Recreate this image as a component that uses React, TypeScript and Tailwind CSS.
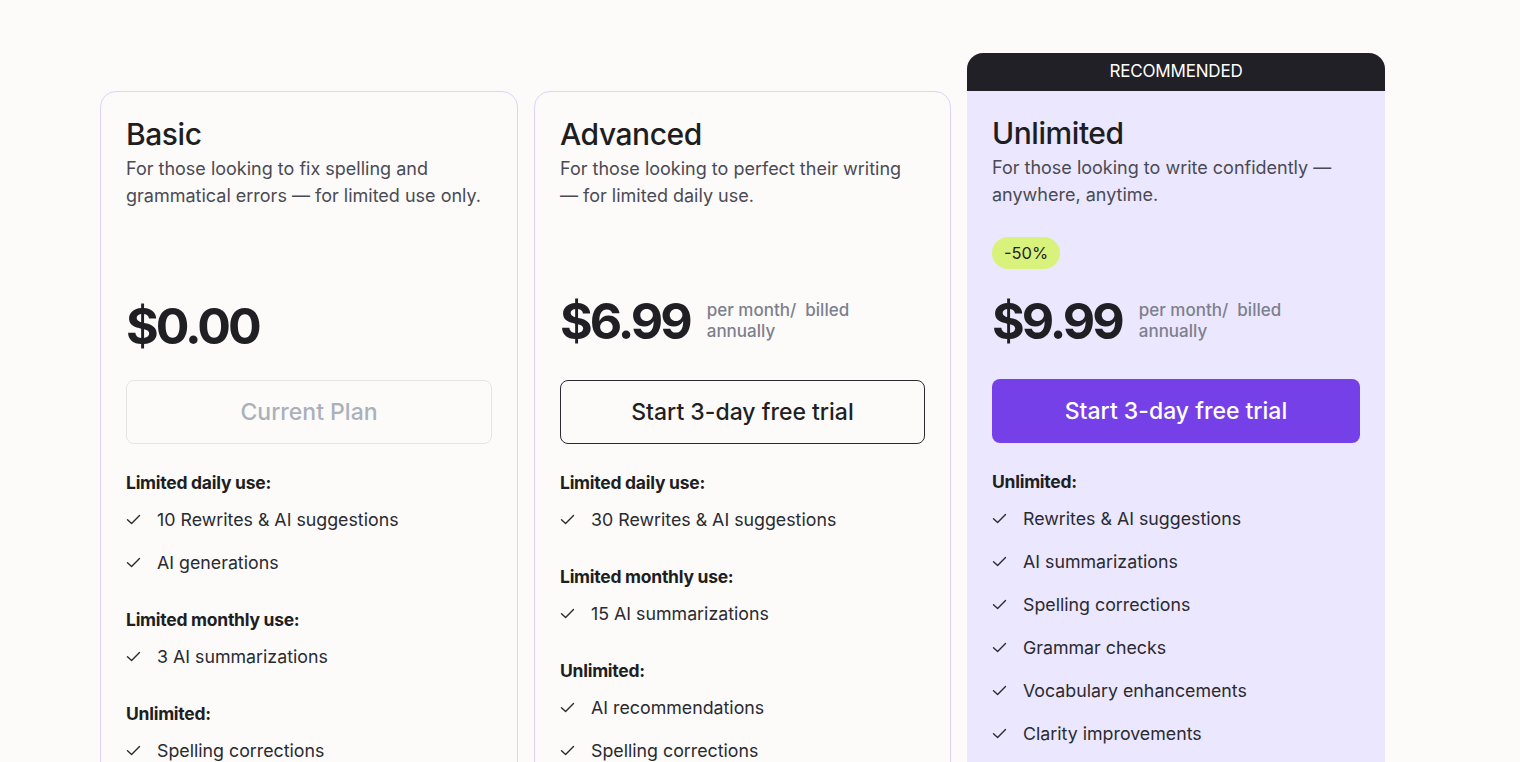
import React from "react";

type Section = { title: string; items: string[] };

const Check = () => (
  <svg width="15" height="15" viewBox="0 0 15 15" fill="none" className="shrink-0">
    <path d="M1.5 7.8 L5.6 11.6 L13.5 3.6" stroke="#2b2b31" strokeWidth="1.4" strokeLinecap="round" strokeLinejoin="round" />
  </svg>
);

const Features = ({ sections }: { sections: Section[] }) => (
  <div className="flex flex-col gap-[30px] mt-[25px]">
    {sections.map((s) => (
      <div key={s.title} className="flex flex-col">
        <div className="text-[17.5px] leading-[27px] font-bold text-[#1e1e23] tracking-[-0.015em]">{s.title}</div>
        <ul className="flex flex-col gap-[16px] mt-[10px]">
          {s.items.map((it) => (
            <li key={it} className="flex items-center gap-[16px] text-[17.8px] leading-[27px] text-[#2a2a31]">
              <Check />
              <span>{it}</span>
            </li>
          ))}
        </ul>
      </div>
    ))}
  </div>
);

const PriceRow = ({ price, sub, shift }: { price: string; sub: boolean; shift?: boolean }) => (
  <div className={`flex items-center gap-[17px] h-[60px] mt-[22px] ${shift ? "pt-[10px]" : ""}`}>
    <div className="text-[50px] leading-[60px] font-bold text-[#1f1f24] tracking-[-0.06em]">{price}</div>
    {sub && (
      <div className="text-[17px] leading-[21px] text-[#7d808d] font-medium whitespace-nowrap">
        per month/&nbsp; billed
        <br />
        annually
      </div>
    )}
  </div>
);

export default function App() {
  return (
    <div
      className="min-h-[762px] bg-[#fcfbfa] pt-[53px] pl-[100px] overflow-hidden"
      style={{ fontFamily: "Inter, 'Noto Sans', sans-serif" }}
    >
      <div className="flex items-start gap-[16px]">
        {/* Basic */}
        <div className="w-[418px] mt-[38px] h-[900px] rounded-[16px] border border-[#d9d5fb] px-[25px] pt-[24px] flex flex-col">
          <div className="text-[30px] leading-[36px] font-medium text-[#1e1e22] tracking-[-0.015em]">Basic</div>
          <div className="mt-[3px] text-[18px] leading-[27px] text-[#4a4a54]">
            For those looking to fix spelling and
            <br />
            grammatical errors — for limited use only.
          </div>
          <div className="h-[32px] mt-[28px]" />
          <PriceRow price="$0.00" sub={false} shift />
          <button className="mt-[29px] h-[64px] w-full rounded-[8px] border border-[#e7e5e4] text-[23px] text-[#aab1bb] font-medium">
            Current Plan
          </button>
          <Features
            sections={[
              { title: "Limited daily use:", items: ["10 Rewrites & AI suggestions", "AI generations"] },
              { title: "Limited monthly use:", items: ["3 AI summarizations"] },
              { title: "Unlimited:", items: ["Spelling corrections", "Grammar checks"] },
            ]}
          />
        </div>

        {/* Advanced */}
        <div className="w-[417px] mt-[38px] h-[900px] rounded-[16px] border border-[#d9d5fb] px-[25px] pt-[24px] flex flex-col">
          <div className="text-[30px] leading-[36px] font-medium text-[#1e1e22] tracking-[-0.015em]">Advanced</div>
          <div className="mt-[3px] text-[18px] leading-[27px] text-[#4a4a54]">
            For those looking to perfect their writing
            <br />— for limited daily use.
          </div>
          <div className="h-[32px] mt-[28px]" />
          <PriceRow price="$6.99" sub />
          <button className="mt-[29px] h-[64px] w-full rounded-[8px] border border-[#2a2a30] text-[23px] text-[#1f1f24] font-medium">
            Start 3-day free trial
          </button>
          <Features
            sections={[
              { title: "Limited daily use:", items: ["30 Rewrites & AI suggestions"] },
              { title: "Limited monthly use:", items: ["15 AI summarizations"] },
              { title: "Unlimited:", items: ["AI recommendations", "Spelling corrections", "Grammar checks"] },
            ]}
          />
        </div>

        {/* Unlimited */}
        <div className="w-[418px] flex flex-col">
          <div className="h-[38px] rounded-t-[16px] bg-[#202026] text-white text-[17px] flex items-center justify-center tracking-[-0.01em]">
            RECOMMENDED
          </div>
          <div className="h-[900px] bg-[#ebe7fe] px-[25px] pt-[24px] flex flex-col">
            <div className="text-[30px] leading-[36px] font-medium text-[#1e1e22] tracking-[-0.015em]">Unlimited</div>
            <div className="mt-[3px] text-[18px] leading-[27px] text-[#4a4a54]">
              For those looking to write confidently —
              <br />
              anywhere, anytime.
            </div>
            <div className="mt-[29px] h-[32px] flex">
              <div className="h-[32px] px-[12px] rounded-full bg-[#d9f27c] text-[16.5px] text-[#1f1f24] flex items-center">-50%</div>
            </div>
            <PriceRow price="$9.99" sub />
            <button className="mt-[28px] h-[64px] w-full rounded-[8px] bg-[#7640e9] text-[23px] text-white font-medium">
              Start 3-day free trial
            </button>
            <Features
              sections={[
                {
                  title: "Unlimited:",
                  items: [
                    "Rewrites & AI suggestions",
                    "AI summarizations",
                    "Spelling corrections",
                    "Grammar checks",
                    "Vocabulary enhancements",
                    "Clarity improvements",
                    "Tone adjustments",
                  ],
                },
              ]}
            />
          </div>
        </div>
      </div>
    </div>
  );
}
